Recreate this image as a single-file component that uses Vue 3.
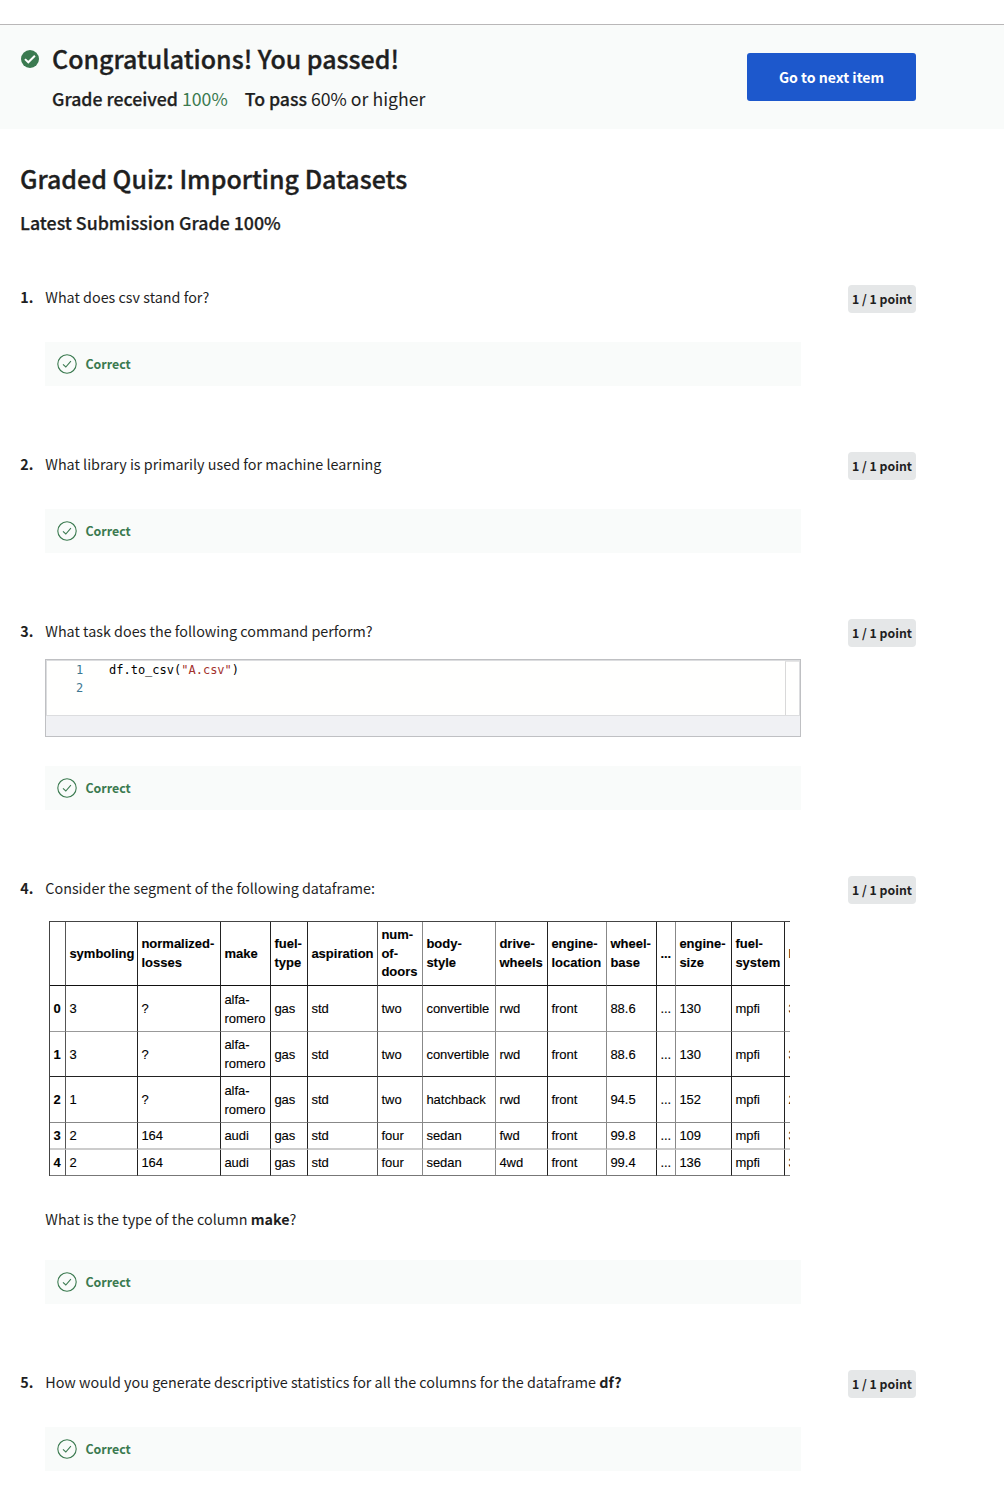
<script setup>
const questions = [
  { id: 1, text: 'What does csv stand for?' },
  { id: 2, text: 'What library is primarily used for machine learning' },
  { id: 3, text: 'What task does the following command perform?', code: true },
  { id: 4, text: 'Consider the segment of the following dataframe:', table: true },
  { id: 5, text: 'How would you generate descriptive statistics for all the columns for the dataframe ', strong: 'df?' }
]
const columns = [16, 72, 83, 50, 37, 70, 45, 73, 52, 59, 50, 19, 56, 53, 60]
const headings = ['', 'symboling', 'normalized-\nlosses', 'make', 'fuel-\ntype', 'aspiration', 'num-\nof-\ndoors', 'body-\nstyle', 'drive-\nwheels', 'engine-\nlocation', 'wheel-\nbase', '...', 'engine-\nsize', 'fuel-\nsystem', 'bore']
const rows = [
  ['0', '3', '?', 'alfa-\nromero', 'gas', 'std', 'two', 'convertible', 'rwd', 'front', '88.6', '...', '130', 'mpfi', '3.47'],
  ['1', '3', '?', 'alfa-\nromero', 'gas', 'std', 'two', 'convertible', 'rwd', 'front', '88.6', '...', '130', 'mpfi', '3.47'],
  ['2', '1', '?', 'alfa-\nromero', 'gas', 'std', 'two', 'hatchback', 'rwd', 'front', '94.5', '...', '152', 'mpfi', '2.68'],
  ['3', '2', '164', 'audi', 'gas', 'std', 'four', 'sedan', 'fwd', 'front', '99.8', '...', '109', 'mpfi', '3.19'],
  ['4', '2', '164', 'audi', 'gas', 'std', 'four', 'sedan', '4wd', 'front', '99.4', '...', '136', 'mpfi', '3.19']
]
</script>

<template>
  <div class="page">
    <header class="banner">
      <svg class="passed" viewBox="0 0 18 18" width="18" height="18">
        <circle cx="9" cy="9" r="9" fill="#3b7a50" />
        <path d="M4 9.1 7.3 12.3 13.9 5.8" fill="none" stroke="#fff" stroke-width="2" />
      </svg>
      <div class="result">
        <h1>Congratulations! You passed!</h1>
        <p class="grades">
          <span><b>Grade received</b> <em>100%</em></span>
          <span><b>To pass</b> 60% or higher</span>
        </p>
      </div>
      <button class="next">Go to next item</button>
    </header>
    <main>
      <h2>Graded Quiz: Importing Datasets</h2>
      <h3>Latest Submission Grade 100%</h3>
      <section v-for="q in questions" :key="q.id" class="question">
        <span class="number">{{ q.id }}.</span>
        <div class="body">
          <p class="prompt">{{ q.text }}<b v-if="q.strong">{{ q.strong }}</b></p>
          <div v-if="q.code" class="editor">
            <div class="editor-view">
              <div class="lines"><span>1</span><span>2</span></div>
              <pre>df.to_csv(<i>"A.csv"</i>)</pre>
              <div class="ruler"></div>
            </div>
          </div>
          <template v-if="q.table">
            <div class="frame">
              <table>
                <colgroup><col v-for="(w, i) in columns" :key="i" :style="{ width: w + 'px' }" /></colgroup>
                <tbody>
                  <tr><th v-for="(h, i) in headings" :key="i">{{ h }}</th></tr>
                  <tr v-for="row in rows" :key="row[0]"><td v-for="(cell, i) in row" :key="i">{{ cell }}</td></tr>
                </tbody>
              </table>
            </div>
            <p class="followup">What is the type of the column <b>make</b>?</p>
          </template>
          <div class="feedback">
            <svg viewBox="0 0 20 20" width="20" height="20" fill="none" stroke="#3b7a50">
              <circle cx="10" cy="10" r="9.2" stroke-width="1.1" />
              <path d="M6 10.3 8.8 13 13.9 7.2" stroke-width="1.1" />
            </svg>
            <span>Correct</span>
          </div>
        </div>
        <span class="points">1 / 1 point</span>
      </section>
    </main>
  </div>
</template>

<style>
body { margin: 0; background: #fff; }
</style>

<style scoped>
* { box-sizing: border-box; }
.page {
  height: 1498px;
  overflow: hidden;
  padding-top: 24px;
  color: #1f1f1f;
  font-family: "Noto Sans CJK SC", "Noto Sans", sans-serif;
  font-size: 14.35px;
}
h1, h2, h3, p, pre { margin: 0; white-space: nowrap; }
.banner {
  display: flex;
  height: 105px;
  padding: 0 88px 0 21px;
  border-top: 1px solid #b9b7b8;
  background: #f9fbfa;
}
.passed { flex: none; margin: 25px 13px 0 0; }
.result { flex: 1; }
h1, h2 { font-size: 24.98px; font-weight: 500; line-height: 36px; -webkit-text-stroke: 0.35px; }
h1 { margin-top: 15px; }
.grades { display: flex; gap: 17px; margin-top: 10px; font-size: 17.7px; line-height: 24px; }
.grades b { font-weight: 500; -webkit-text-stroke: 0.25px; }
.grades em { color: #3b7a50; font-style: normal; }
.next {
  width: 169px;
  height: 48px;
  margin-top: 28px;
  padding: 0;
  border: 0;
  border-radius: 3px;
  background: #1d58cc;
  color: #fff;
  font: 700 14.1px/48px "Noto Sans CJK SC", sans-serif;
}
main { padding: 31px 88px 0 20px; }
h3 { margin: 13px 0 50px; font-size: 17.8px; font-weight: 500; line-height: 26px; -webkit-text-stroke: 0.25px; }
.question { display: flex; align-items: flex-start; margin-bottom: 66px; }
.number { width: 25px; padding-left: 0.3px; font-weight: 700; line-height: 23px; }
.body { width: 756px; }
.prompt { height: 28px; padding-left: 0.3px; line-height: 23px; }
.points {
  width: 68px;
  height: 28px;
  margin-left: auto;
  border-radius: 4px;
  background: #e5e7e8;
  font-size: 12.3px;
  font-weight: 700;
  line-height: 28px;
  text-align: center;
  white-space: nowrap;
}
.feedback {
  display: flex;
  align-items: center;
  height: 44px;
  margin-top: 29px;
  padding-left: 12px;
  gap: 8.4px;
  background: #f9fbfa;
  color: #3b7a50;
  font-size: 12.4px;
  font-weight: 700;
  line-height: 20px;
}
.editor { height: 78px; margin-top: 12px; border: 1px solid #bfc0c3; background: #f0f1f4; }
.editor-view {
  display: flex;
  height: 56px;
  border: 1px solid #dcdddf;
  background: #fffffe;
  font: 12px/18px "DejaVu Sans Mono", monospace;
}
.lines { display: flex; flex-direction: column; width: 62px; padding-left: 29px; color: #3d7791; }
pre { font: inherit; color: #000; }
pre i { color: #a2302c; font-style: normal; }
.ruler { width: 14px; margin-left: auto; border-left: 1px solid #d9d9d9; border-top: 1px solid #e6e6e6; }
.frame { width: 741px; height: 255px; margin: 17px 0 0 4px; overflow: hidden; }
table {
  width: 796px;
  table-layout: fixed;
  border-spacing: 0;
  border-top: 1px solid #444;
  border-left: 1px solid #444;
  color: #000;
  font: 13px/18.7px "Liberation Sans", sans-serif;
  -webkit-text-stroke: 0.12px;
}
th, td {
  height: 46px;
  padding: 2px 0 0 3.4px;
  border-right: 1px solid #222;
  border-bottom: 1px solid #888;
  text-align: left;
  vertical-align: middle;
  white-space: pre;
}
th { height: 64px; padding-top: 1.2px; border-bottom-color: #111; }
td:first-child { font-weight: 700; }
tr:nth-child(2) td { border-bottom-color: #999; }
tr:nth-child(3) td { height: 45px; border-bottom-color: #222; }
tr:nth-child(5) td { height: 27px; border-bottom: 2px solid #ccc; }
tr:nth-child(6) td { height: 26px; border-bottom-color: #777; }
tr > :nth-child(1), tr > :nth-child(6) { border-right-color: #555; }
tr > :nth-child(7), tr > :nth-child(8), tr > :nth-child(10), tr > :nth-child(12) { border-right-color: #888; }
.followup { margin-top: 31px; padding-left: 0.3px; line-height: 24px; }
</style>
